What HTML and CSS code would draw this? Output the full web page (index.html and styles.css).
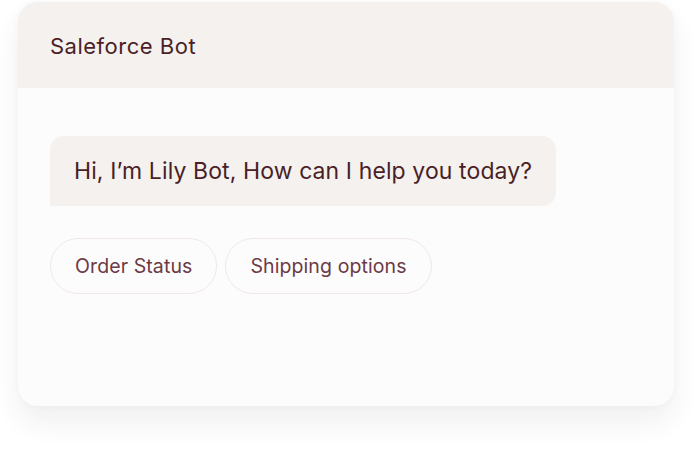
FILE: index.html
```html
<!DOCTYPE html>
<html>
<head>
<meta charset="utf-8">
<link rel="stylesheet" href="styles.css">
</head>
<body>
<div class="card">
  <div class="card-header">Saleforce Bot</div>
  <div class="card-body">
    <div class="bubble">Hi, I’m Lily Bot, How can I help you today?</div>
    <div class="chips">
      <button class="chip">Order Status</button>
      <button class="chip">Shipping options</button>
    </div>
  </div>
</div>
</body>
</html>
```
FILE: styles.css
```css
html, body {
  margin: 0;
  padding: 0;
  background: #ffffff;
}
body {
  font-family: "Inter", "DejaVu Sans", sans-serif;
  padding: 2px 18px 0;
  min-height: 452px;
  box-sizing: border-box;
}
.card {
  width: 656px;
  height: 404px;
  border-radius: 20px;
  background: #fdfcfc;
  overflow: hidden;
  box-shadow: 0 16px 28px rgba(60, 40, 40, 0.07), 0 0 8px rgba(60, 40, 40, 0.03);
  display: flex;
  flex-direction: column;
}
.card-header {
  height: 86px;
  background: #f4f1ee;
  display: flex;
  align-items: center;
  padding-left: 32px;
  padding-top: 1px;
  box-sizing: border-box;
  font-size: 22px;
  letter-spacing: 0.5px;
  color: #4a1f26;
}
.card-body {
  padding: 48px 32px;
  display: flex;
  flex-direction: column;
  align-items: flex-start;
}
.bubble {
  height: 70px;
  box-sizing: border-box;
  display: flex;
  align-items: center;
  padding: 0 24px;
  background: #f4f1ee;
  border-radius: 14px 14px 14px 0;
  font-size: 23px;
  letter-spacing: 0.1px;
  color: #4a1f26;
}
.chips {
  margin-top: 32px;
  display: flex;
  gap: 8px;
}
.chip {
  height: 56px;
  padding: 0 24px;
  border: 1px solid #efe6e8;
  border-radius: 28px;
  background: #fdfcfc;
  font-family: inherit;
  font-size: 19.5px;
  letter-spacing: 0.1px;
  color: #6b3a45;
}
```
